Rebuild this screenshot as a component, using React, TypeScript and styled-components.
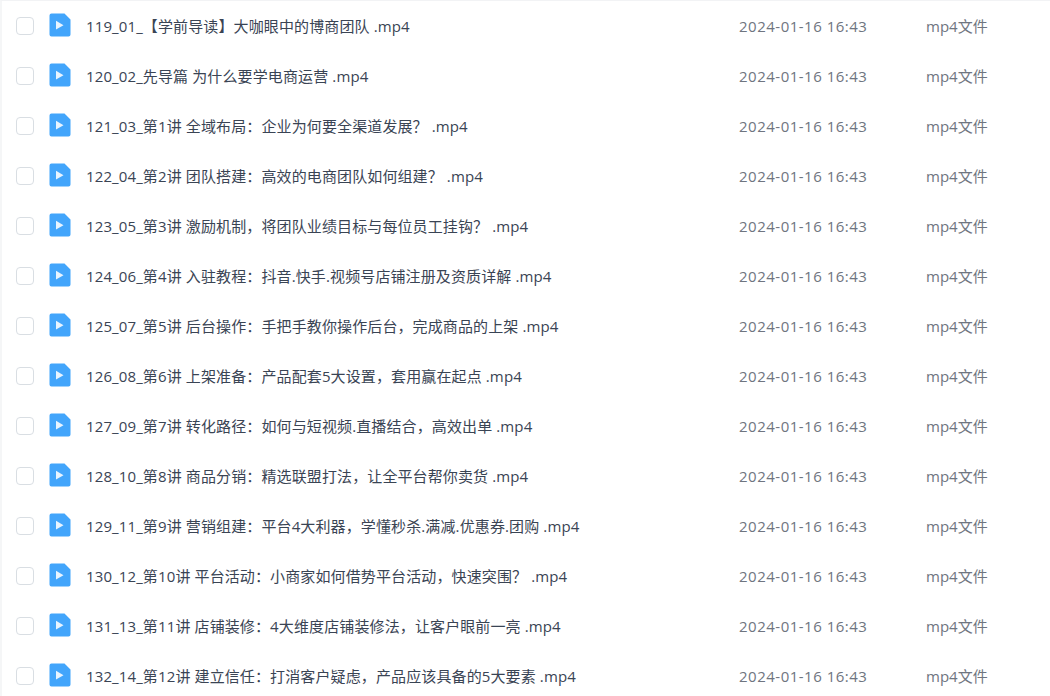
import styled, { createGlobalStyle } from "styled-components";

const files = [
  "119_01_【学前导读】大咖眼中的博商团队 .mp4",
  "120_02_先导篇 为什么要学电商运营 .mp4",
  "121_03_第1讲 全域布局：企业为何要全渠道发展？ .mp4",
  "122_04_第2讲 团队搭建：高效的电商团队如何组建？ .mp4",
  "123_05_第3讲 激励机制，将团队业绩目标与每位员工挂钩？ .mp4",
  "124_06_第4讲 入驻教程：抖音.快手.视频号店铺注册及资质详解 .mp4",
  "125_07_第5讲 后台操作：手把手教你操作后台，完成商品的上架 .mp4",
  "126_08_第6讲 上架准备：产品配套5大设置，套用赢在起点 .mp4",
  "127_09_第7讲 转化路径：如何与短视频.直播结合，高效出单 .mp4",
  "128_10_第8讲 商品分销：精选联盟打法，让全平台帮你卖货 .mp4",
  "129_11_第9讲 营销组建：平台4大利器，学懂秒杀.满减.优惠券.团购 .mp4",
  "130_12_第10讲 平台活动：小商家如何借势平台活动，快速突围？ .mp4",
  "131_13_第11讲 店铺装修：4大维度店铺装修法，让客户眼前一亮 .mp4",
  "132_14_第12讲 建立信任：打消客户疑虑，产品应该具备的5大要素 .mp4",
];

const GlobalStyle = createGlobalStyle`
  html, body {
    margin: 0;
    padding: 0;
    height: 696px;
    overflow: hidden;
    background: #fff;
  }
`;

const Page = styled.div`
  height: 696px;
  box-sizing: border-box;
  overflow: hidden;
  border-top: 1px solid #f2f3f5;
  border-left: 2px solid #f5f6f7;
  font-family: "Open Sans", "Noto Sans CJK SC", sans-serif;
  font-size: 15px;
  line-height: 20px;
`;

const Row = styled.div`
  display: grid;
  grid-template-columns: 14px 1fr 187px 124px;
  align-items: center;
  height: 50px;
  padding-left: 14px;
`;

const Checkbox = styled.span`
  width: 18px;
  height: 18px;
  box-sizing: border-box;
  border: 1.5px solid #d9dee3;
  border-radius: 4px;
  background: #fff;
`;

const NameCell = styled.div`
  display: flex;
  align-items: center;
  gap: 15px;
  padding-left: 19px;
  color: #3a4454;
  letter-spacing: 0.12px;
  white-space: nowrap;
`;

const DateCell = styled.div`
  color: #6f7580;
  letter-spacing: 0.5px;
  white-space: nowrap;
`;

const TypeCell = styled.div`
  color: #6f7580;
  white-space: nowrap;
`;

const IconSvg = styled.svg`
  flex-shrink: 0;
  margin-bottom: 2px;
`;

const VideoIcon = () => (
  <IconSvg width="22" height="24" viewBox="0 0 22 24">
    <path
      d="M2.5 0.5H15.5L21.5 6.5V21.5a2 2 0 0 1-2 2H2.5a2 2 0 0 1-2-2V2.5a2 2 0 0 1 2-2Z"
      fill="#42a5fb"
    />
    <path d="M7 7.8L14.5 12.2L7 16.6Z" fill="#e8f4ff" />
  </IconSvg>
);

export default function App() {
  return (
    <>
      <GlobalStyle />
      <Page>
        {files.map((name) => (
          <Row key={name}>
            <Checkbox />
            <NameCell>
              <VideoIcon />
              <span>{name}</span>
            </NameCell>
            <DateCell>2024-01-16 16:43</DateCell>
            <TypeCell>mp4文件</TypeCell>
          </Row>
        ))}
      </Page>
    </>
  );
}
